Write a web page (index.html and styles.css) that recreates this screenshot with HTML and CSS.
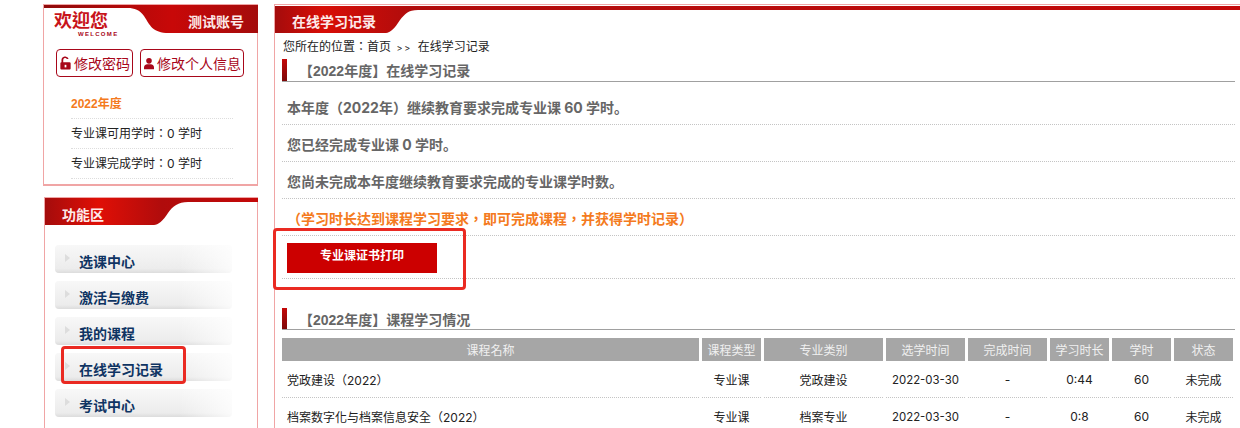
FILE: index.html
```html
<!DOCTYPE html>
<html lang="en">
<head>
    <meta charset="UTF-8">
    <title>在线学习记录</title>
    <link rel="stylesheet" href="styles.css">
</head>
<body>
    <div class="page">
        <!-- Left column -->
        <div class="sidebar">
            <div class="panel welcome">
                <div class="welcome-head">
                    <svg class="welcome-bg" width="214" height="29" viewBox="0 0 214 29">
                        <defs>
                            <linearGradient id="redRight" x1="0" y1="0" x2="1" y2="0">
                                <stop offset="0" stop-color="#8f0b0b"/>
                                <stop offset="0.6" stop-color="#c80808"/>
                                <stop offset="1" stop-color="#a40c0c"/>
                            </linearGradient>
                        </defs>
                        <path d="M0 0H214V28H125C108 28 106 20 100 11C96 5 90 3 84 3H0Z" fill="url(#redRight)"/>
                    </svg>
                    <div class="welcome-title">欢迎您<span class="welcome-en">WELCOME</span></div>
                    <div class="welcome-user">测试账号</div>
                </div>
                <div class="welcome-btns">
                    <a class="line-btn btn-pwd">
                        <svg width="14" height="18" viewBox="0 0 15 18"><path d="M2 8V5a5 5 0 0 1 9.800-1.400h-2.500A2.600 2.600 0 0 0 4.400 5v3H13a1.500 1.500 0 0 1 1.500 1.500v7A1.500 1.500 0 0 1 13 18H2a1.500 1.500 0 0 1-1.500-1.500v-7A1.500 1.500 0 0 1 2 8Z" fill="#a8071a"/><rect x="6.300" y="11.500" width="2.400" height="3.500" fill="#fff"/></svg>
                        修改密码
                    </a>
                    <a class="line-btn btn-info">
                        <svg width="15" height="17" viewBox="0 0 15 17"><circle cx="7.500" cy="4.500" r="4.200" fill="#a8071a"/><path d="M0 17v-3c0-3 3-4.500 4.500-4.500h6c1.500 0 4.500 1.500 4.500 4.500v3Z" fill="#a8071a"/></svg>
                        修改个人信息
                    </a>
                </div>
                <ul class="hours">
                    <li class="hours-year">2022年度</li>
                    <li>专业课可用学时：0 学时</li>
                    <li>专业课完成学时：0 学时</li>
                </ul>
            </div>

            <div class="panel funcs">
                <div class="tab-head">
                    <svg class="tab-bg" width="213" height="28" viewBox="0 0 213 28">
                        <defs>
                            <linearGradient id="redLeft" x1="0" y1="0" x2="1" y2="0">
                                <stop offset="0" stop-color="#a40c0c"/>
                                <stop offset="0.25" stop-color="#e00f06"/>
                                <stop offset="0.55" stop-color="#b00c0c"/>
                                <stop offset="1" stop-color="#c40808"/>
                            </linearGradient>
                        </defs>
                        <path d="M0 0H213V4H143C133 4 128 8 123 15C118 23 113 27 109 27H0Z" fill="url(#redLeft)"/>
                    </svg>
                    <span class="tab-label">功能区</span>
                </div>
                <ul class="menu">
                    <li>选课中心</li>
                    <li>激活与缴费</li>
                    <li>我的课程</li>
                    <li>在线学习记录</li>
                    <li>考试中心</li>
                </ul>
                <div class="mark mark-menu"></div>
            </div>
        </div>

        <!-- Main column -->
        <div class="panel main">
            <div class="tab-head">
                <svg class="tab-bg" width="965" height="28" viewBox="0 0 965 28">
                    <defs>
                        <linearGradient id="redMain" x1="0" y1="0" x2="1" y2="0">
                            <stop offset="0" stop-color="#a40c0c"/>
                            <stop offset="0.05" stop-color="#d80d06"/>
                            <stop offset="0.14" stop-color="#b00c0c"/>
                            <stop offset="1" stop-color="#c40808"/>
                        </linearGradient>
                    </defs>
                    <path d="M0 1H965V5H143C133 5 130 9 125 15C120 23 115 28 111 28H0Z" fill="url(#redMain)"/>
                </svg>
                <span class="tab-label">在线学习记录</span>
            </div>
            <div class="crumb">您所在的位置：首页 <span class="crumb-sep">&gt;&gt;</span> 在线学习记录</div>

            <h3 class="sec-title">【2022年度】在线学习记录</h3>
            <p class="note note-first">本年度（2022年）继续教育要求完成专业课 60 学时。</p>
            <p class="note">您已经完成专业课 0 学时。</p>
            <p class="note">您尚未完成本年度继续教育要求完成的专业课学时数。</p>
            <p class="note note-orange">（学习时长达到课程学习要求，即可完成课程，并获得学时记录）</p>
            <div class="print-row"><a class="print-btn">专业课证书打印</a></div>
            <div class="mark mark-print"></div>

            <h3 class="sec-title sec-second">【2022年度】课程学习情况</h3>
            <table class="courses">
                <thead>
                    <tr>
                        <th class="col-name">课程名称</th>
                        <th class="col-type">课程类型</th>
                        <th class="col-cat">专业类别</th>
                        <th class="col-date">选学时间</th>
                        <th class="col-date">完成时间</th>
                        <th class="col-num">学习时长</th>
                        <th class="col-num">学时</th>
                        <th class="col-num">状态</th>
                    </tr>
                </thead>
                <tbody>
                    <tr>
                        <td class="cell-name">党政建设（2022）</td>
                        <td>专业课</td>
                        <td>党政建设</td>
                        <td class="cell-date">2022-03-30</td>
                        <td>-</td>
                        <td>0:44</td>
                        <td>60</td>
                        <td>未完成</td>
                    </tr>
                    <tr>
                        <td class="cell-name">档案数字化与档案信息安全（2022）</td>
                        <td>专业课</td>
                        <td>档案专业</td>
                        <td class="cell-date">2022-03-30</td>
                        <td>-</td>
                        <td>0:8</td>
                        <td>60</td>
                        <td>未完成</td>
                    </tr>
                </tbody>
            </table>
        </div>
    </div>
</body>
</html>
```

FILE: styles.css
```css
html, body {
    margin: 0;
    padding: 0;
    height: 428px;
    overflow: hidden;
    background-color: #fff;
}

body {
    font-family: Inter, "Noto Sans CJK TC", sans-serif;
    font-size: 12px;
    color: #222;
}

ul {
    list-style: none;
    margin: 0;
    padding: 0;
}

.page {
    height: 428px;
    overflow: hidden;
    display: flex;
    align-items: flex-start;
    padding: 4px 0 0 43px;
    box-sizing: border-box;
}

.sidebar {
    width: 215px;
    margin-right: 16px;
    flex-shrink: 0;
}

.panel {
    position: relative;
    border: 1px solid #f0a5a5;
    background-color: #fff;
}

/* Welcome box */
.welcome {
    height: 179px;
    border-bottom-width: 2px;
}

.welcome-head {
    position: relative;
    display: flex;
    justify-content: space-between;
    height: 29px;
}

.welcome-bg {
    position: absolute;
    top: 0;
    left: 0;
}

.welcome-title {
    position: relative;
    padding: 4px 0 0 10px;
    font-size: 18px;
    line-height: 24px;
    font-weight: bold;
    color: #c8141a;
}

.welcome-en {
    position: absolute;
    top: 26px;
    left: 34px;
    font-family: "Liberation Sans", sans-serif;
    font-size: 6px;
    line-height: 7px;
    font-weight: bold;
    letter-spacing: 1.3px;
    color: #a8071a;
}

.welcome-user {
    position: relative;
    padding: 8px 13px 0 0;
    font-size: 14px;
    line-height: 17px;
    font-weight: bold;
    color: #fdeaea;
}

.welcome-btns {
    display: flex;
    gap: 7px;
    padding: 15px 0 0 12px;
}

.line-btn {
    display: flex;
    align-items: center;
    gap: 3px;
    height: 26px;
    padding: 0 2px 0 3px;
    border: 1px solid #a8071a;
    border-radius: 4px;
    font-size: 14px;
    color: #a8071a;
    white-space: nowrap;
}

.btn-pwd {
    width: 70px;
}

.btn-info {
    width: 97px;
}

.hours {
    margin: 12px 0 0 27px;
    width: 162px;
}

.hours li {
    height: 29px;
    line-height: 30px;
    border-bottom: 1px dotted #ddd;
    color: #222;
}

.hours .hours-year {
    font-family: "Liberation Sans", "Noto Sans CJK TC", sans-serif;
    font-weight: bold;
    color: #f47a20;
}

/* Red tab heading */
.tab-head {
    position: relative;
    height: 28px;
}

.tab-bg {
    position: absolute;
    top: 0;
    left: 0;
}

.tab-label {
    position: relative;
    display: block;
    padding: 8px 0 0 17px;
    font-size: 14px;
    line-height: 18px;
    font-weight: bold;
    color: #fdeaea;
}

/* Function menu */
.funcs {
    margin: 11px 0 0 1px;
    width: 212px;
    height: 240px;
}

.menu {
    padding: 19px 0 0 10px;
}

.menu li {
    position: relative;
    width: 177px;
    height: 28px;
    margin-bottom: 8px;
    padding-left: 24px;
    box-sizing: border-box;
    border-radius: 4px;
    background:
        linear-gradient(to right, rgba(255, 255, 255, 0) 70%, rgba(255, 255, 255, 0.8) 100%),
        linear-gradient(#f8f8f8, #ececec 85%, #dcdcdc);
    font-size: 14px;
    line-height: 34px;
    font-weight: bold;
    color: #0f3463;
}

.menu li::before {
    content: "";
    position: absolute;
    top: 9px;
    left: 10px;
    border-left: 5px solid #ddd;
    border-top: 4px solid transparent;
    border-bottom: 4px solid transparent;
}

/* Hand-drawn red marks on the screenshot */
.mark {
    position: absolute;
    box-sizing: border-box;
    border: 3px solid #ea2a22;
    border-radius: 4px;
}

.mark-menu {
    top: 148px;
    left: 16px;
    width: 125px;
    height: 38px;
}

.mark-print {
    top: 223px;
    left: -2px;
    width: 193px;
    height: 62px;
}

/* Main column */
.main {
    width: 965px;
    height: 500px;
    border-right: none;
}

.crumb {
    height: 18px;
    padding: 5px 0 0 8px;
    line-height: 18px;
}

.crumb-sep {
    margin: 0 2px 0 2px;
    font-size: 9px;
    line-height: 1;
    letter-spacing: 2px;
}

.sec-title {
    margin: 3px 5px 0 7px;
    height: 22px;
    padding-left: 17px;
    border-bottom: 1px solid #a0a0a0;
    background: linear-gradient(#c40808, #7d0808) 0 0 / 5px 100% no-repeat;
    font-family: "Liberation Sans", "Noto Sans CJK TC", sans-serif;
    font-size: 14px;
    line-height: 24px;
    font-weight: bold;
    color: #666;
}

.sec-second {
    margin-top: 29px;
    height: 21px;
}

.note {
    margin: 0 5px 0 7px;
    height: 36px;
    padding-left: 5px;
    border-bottom: 1px dotted #c4c4c4;
    font-family: Inter, "Noto Sans CJK SC", sans-serif;
    font-size: 14px;
    line-height: 40px;
    font-weight: bold;
    color: #666;
}

.note-first {
    margin-top: 6px;
}

.note-orange {
    font-family: Inter, "Noto Sans CJK TC", sans-serif;
    color: #f47a20;
}

.print-row {
    margin: 0 5px 0 7px;
    height: 43px;
    padding: 7px 0 0 5px;
    box-sizing: border-box;
    border-bottom: 1px dotted #c4c4c4;
}

.print-btn {
    display: block;
    width: 150px;
    height: 30px;
    background-color: #cc0000;
    color: #fff;
    font-size: 12px;
    line-height: 25px;
    font-weight: bold;
    text-align: center;
}

/* Course table */
.courses {
    margin: 8px 0 0 4px;
    width: 957px;
    table-layout: fixed;
    border-collapse: separate;
    border-spacing: 3px 0;
}

.courses th {
    height: 23px;
    padding: 0;
    background-color: #a6a6a6;
    color: #f0f0f0;
    font-size: 12px;
    font-weight: normal;
}

.courses td {
    height: 35px;
    padding: 1px 0 0;
    border-bottom: 1px dotted #c4c4c4;
    text-align: center;
    color: #222;
}

.courses .cell-name {
    padding-left: 5px;
    text-align: left;
}

.courses .cell-date {
    font-size: 11.4px;
}

.col-name { width: 417px; }
.col-type { width: 59px; }
.col-cat { width: 119px; }
.col-date { width: 79px; }
.col-num { width: 59px; }
```
